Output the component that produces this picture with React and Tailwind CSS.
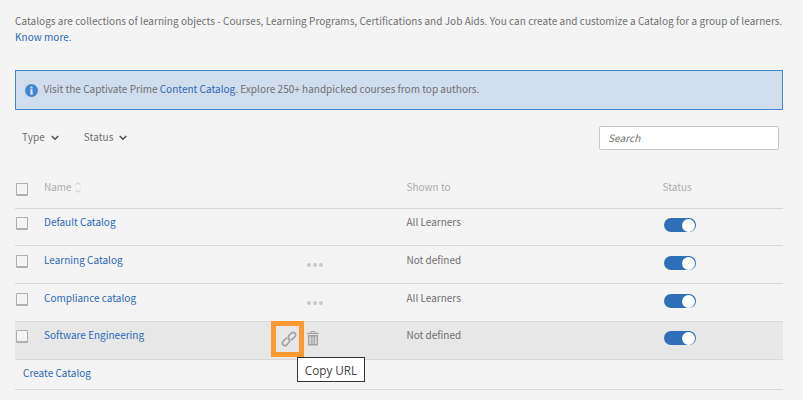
import React from 'react';

function Checkbox() {
  return <span className="block h-[13px] w-3 rounded-[1px] border border-b-2 border-[#b0b0b0] bg-[#f4f4f4]" />;
}

function Toggle() {
  return (
    <span className="flex h-3.5 w-8 items-center justify-end rounded-full bg-[#2f6fb7] pr-px">
      <span className="size-[13px] rounded-full bg-white" />
    </span>
  );
}

function Chevron() {
  return (
    <svg className="mt-[2px] h-[6px] w-2" viewBox="0 0 8 6" fill="none" stroke="#4b4b4b" strokeWidth="1.4">
      <path d="M.7 1 4 4.3 7.3 1" />
    </svg>
  );
}

function Filter({ label }) {
  return (
    <button className="flex items-center gap-[6px] leading-4">
      <span>{label}</span>
      <Chevron />
    </button>
  );
}

function LinkIcon() {
  return (
    <svg className="size-4" viewBox="0 0 16 16" fill="none" stroke="#a3a3a3" strokeWidth="1.7" strokeLinecap="round">
      <path d="M8 7.4C7.1 6.4 7.2 5.3 8 4.5L10.3 2.2a2.5 2.5 0 0 1 3.6 3.5L11.8 7.9a2.2 2.2 0 0 1-1.5.7" />
      <path d="M8 8.6C8.9 9.6 8.8 10.7 8 11.5L5.7 13.8a2.5 2.5 0 0 1-3.6-3.5L4.2 8.1a2.2 2.2 0 0 1 1.5-.7" />
    </svg>
  );
}

function TrashIcon() {
  return (
    <svg className="h-[15px] w-3" viewBox="0 0 12 15" fill="none" stroke="#a3a3a3">
      <path d="M0 2.5h12" strokeWidth="1.3" />
      <path d="M4 2.5v-2h4v2" />
      <path d="M1.7 4.7h8.6v9.1H1.7z" strokeWidth="1.5" />
      <path d="M4.3 5v9M6 5v9M7.7 5v9" strokeWidth="1.1" />
    </svg>
  );
}

function Dots() {
  return (
    <span className="mt-[17px] ml-[35.5px] flex gap-[2px]">
      <i className="size-1 rounded-full bg-[#c9c9c9]" />
      <i className="size-1 rounded-full bg-[#c9c9c9]" />
      <i className="size-1 rounded-full bg-[#c9c9c9]" />
    </span>
  );
}

function RowActions() {
  return (
    <div className="relative flex">
      <span className="-mt-px flex h-9 w-[33px] items-center justify-center border-[5px] border-[#ff9a32] pl-[2px]">
        <LinkIcon />
      </span>
      <span className="mt-[9px] ml-[3px]">
        <TrashIcon />
      </span>
      <div className="absolute top-[35px] left-[26px] z-10 flex h-[25px] w-[68px] items-center justify-center border border-[#333] bg-white font-['Open_Sans','Noto_Sans',sans-serif] text-[11.7px] whitespace-nowrap text-[#444]">
        Copy URL
      </div>
    </div>
  );
}

const rows = [
  { name: 'Default Catalog', shown: 'All Learners', style: 'h-[37px]', pad: 'pt-2', text: 'pt-[5px]', toggle: 'pt-[9px]' },
  { name: 'Learning Catalog', shown: 'Not defined', style: 'h-[38px]', pad: 'pt-[9px]', text: 'pt-[6px]', toggle: 'pt-[10px]', dots: true },
  { name: 'Compliance catalog', shown: 'All Learners', style: 'h-[38px]', pad: 'pt-[9px]', text: 'pt-[6px]', toggle: 'pt-[10px]', dots: true },
  { name: 'Software Engineering', shown: 'Not defined', style: 'h-[38px] bg-[#e7e7e7]', pad: 'pt-2', text: 'pt-[5px]', toggle: 'pt-[9px]', selected: true },
];

export default function App() {
  return (
    <main className="h-[400px] w-[803px] overflow-hidden bg-[#f4f4f4] pt-[13px] pr-5 pl-[15px] font-['Noto_Sans_CJK_SC',sans-serif] text-[10px] leading-4 text-[#707070]">
      <p className="tracking-[0.038px] whitespace-nowrap">
        Catalogs are collections of learning objects - Courses, Learning Programs, Certifications and Job Aids. You can create and customize a Catalog for a group of learners.
        <br />
        <a className="text-[#2c69b4]">Know more.</a>
      </p>

      <section className="mt-[25px] flex h-10 items-center border border-[#4485cf] bg-[#d0ddec] pl-[9px]">
        <svg className="mr-[5.5px] size-[13px]" viewBox="0 0 13 13">
          <circle cx="6.5" cy="6.5" r="6.5" fill="#4285d2" />
          <path d="M5.5 2.5h2v2h-2zM5 5.5h2.5v4H8v1H5v-1h.5v-3H5z" fill="#e1eaf5" />
        </svg>
        <span className="pb-[2px] tracking-[0.01px]">
          Visit the Captivate Prime <a className="text-[#2c69b4]">Content Catalog</a>. Explore 250+ handpicked courses from top authors.
        </span>
      </section>

      <div className="mt-4 flex h-6 items-center pr-1 pl-[7px]">
        <div className="flex gap-[25px] pb-[2px] tracking-[0.06px]">
          <Filter label="Type" />
          <Filter label="Status" />
        </div>
        <div className="ml-auto flex h-6 w-[180px] items-center rounded-[2px] border border-[#c8c8c8] bg-white pl-2 tracking-[0.06px] italic">Search</div>
      </div>

      <section className="mt-[22px]">
        <div className="grid h-[37px] grid-cols-[29px_227px_135.5px_256.5px_1fr] border-b border-[#d9d9d9] text-[#adadad]">
          <div className="pt-[11px] pl-px"><Checkbox /></div>
          <div className="flex items-start gap-[3px] pt-[7px]">
            <span>Name</span>
            <svg className="mt-[3px] h-[11px] w-[6px]" viewBox="0 0 6 11" fill="none" stroke="#c9c9c9">
              <path d="M.5 3 3 .7 5.5 3M.5 8 3 10.3 5.5 8" />
            </svg>
          </div>
          <div />
          <div className="pt-[7px]">Shown to</div>
          <div className="-ml-[0.5px] pt-[7px]">Status</div>
        </div>
        {rows.map((row) => (
          <div key={row.name} className={`grid grid-cols-[29px_227px_135.5px_256.5px_1fr] border-b border-[#d9d9d9] ${row.style}`}>
            <div className={`pl-px ${row.pad}`}><Checkbox /></div>
            <a className={`text-[#2c69b4] ${row.text}`}>{row.name}</a>
            <div>
              {row.dots && <Dots />}
              {row.selected && <RowActions />}
            </div>
            <div className={row.text}>{row.shown}</div>
            <div className={`pl-[0.5px] ${row.toggle}`}><Toggle /></div>
          </div>
        ))}
        <div className="h-[30px] border-b border-[#d9d9d9] pt-[5px] pl-2 text-[#2c69b4]">Create Catalog</div>
      </section>
    </main>
  );
}
